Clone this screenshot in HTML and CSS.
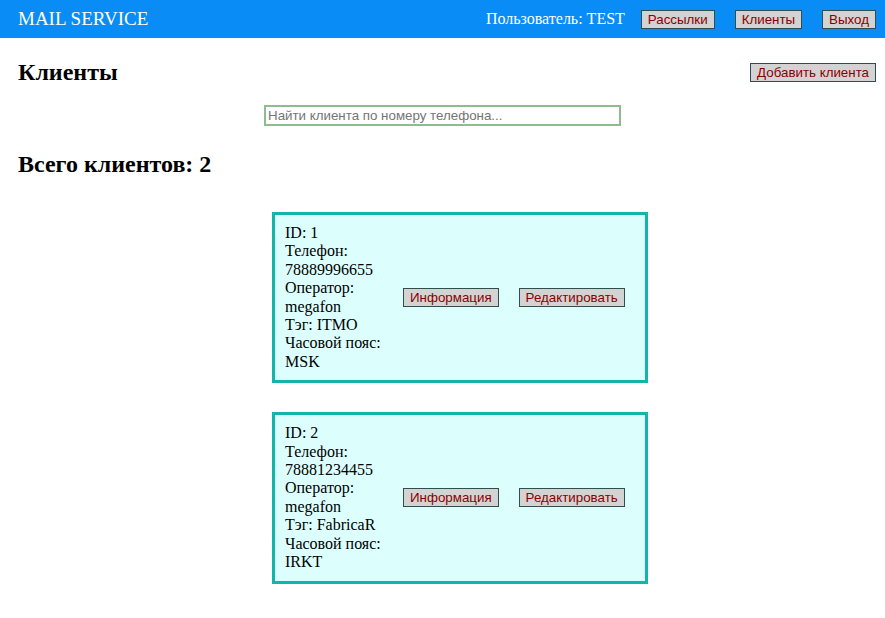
FILE: index.html
```html
<!DOCTYPE html>
<html lang="ru">
<head>
<meta charset="utf-8">
<title>Mail Service</title>
<link rel="stylesheet" href="styles.css">
</head>
<body>
<header class="topbar">
  <div class="brand">MAIL SERVICE</div>
  <nav class="nav">
    <span class="user">Пользователь: TEST</span>
    <button class="btn">Рассылки</button>
    <button class="btn">Клиенты</button>
    <button class="btn">Выход</button>
  </nav>
</header>
<main class="main">
  <div class="title-row">
    <h2 class="heading">Клиенты</h2>
    <button class="btn">Добавить клиента</button>
  </div>
  <div class="search-row">
    <input class="search" type="text" placeholder="Найти клиента по номеру телефона...">
  </div>
  <h2 class="heading total">Всего клиентов: 2</h2>
  <div class="cards">
    <div class="card">
      <div class="info">
        <div>ID: 1</div>
        <div>Телефон: 78889996655</div>
        <div>Оператор: megafon</div>
        <div>Тэг: ITMO</div>
        <div>Часовой пояс: MSK</div>
      </div>
      <div class="actions">
        <button class="btn">Информация</button>
        <button class="btn">Редактировать</button>
      </div>
    </div>
    <div class="card">
      <div class="info">
        <div>ID: 2</div>
        <div>Телефон: 78881234455</div>
        <div>Оператор: megafon</div>
        <div>Тэг: FabricaR</div>
        <div>Часовой пояс: IRKT</div>
      </div>
      <div class="actions">
        <button class="btn">Информация</button>
        <button class="btn">Редактировать</button>
      </div>
    </div>
  </div>
</main>
</body>
</html>
```
FILE: styles.css
```css
html, body {
  margin: 0;
  padding: 0;
  background: #ffffff;
  font-family: "Liberation Serif", "Times New Roman", serif;
  color: #000;
}
.topbar {
  height: 38px;
  background: #0a8cf6;
  display: flex;
  align-items: center;
  justify-content: space-between;
  padding: 0 9px 0 18px;
  color: #fff;
}
.brand {
  font-size: 19px;
}
.nav {
  display: flex;
  align-items: center;
  gap: 20px;
}
.user {
  font-size: 16px;
  margin-right: -4px;
}
.btn {
  font-family: "Liberation Sans", Arial, sans-serif;
  font-size: 13.333px;
  line-height: 15px;
  padding: 1px 6px;
  margin: 0;
  background: #d3d3d3;
  color: #8b0000;
  border: 1px solid #2f4f4f;
  border-radius: 0;
}
.main {
  padding: 0 9px 0 18px;
}
.title-row {
  display: flex;
  align-items: center;
  justify-content: space-between;
  margin-top: 20px;
}
.heading {
  font-size: 24px;
  font-weight: bold;
  margin: 0;
  line-height: 28px;
}
.search-row {
  display: flex;
  justify-content: center;
  margin: 19px 0 0 -9px;
}
.search {
  width: 357px;
  height: 21px;
  box-sizing: border-box;
  border: 2px solid #8fbc8f;
  padding: 0 2px;
  font-family: "Liberation Sans", Arial, sans-serif;
  font-size: 13.333px;
  outline: none;
}
.search::placeholder {
  color: #757575;
}
.total {
  margin-top: 24px;
}
.cards {
  display: flex;
  flex-direction: column;
  align-items: flex-start;
  gap: 29px;
  padding-left: 254px;
  margin-top: 34px;
}
.card {
  width: 376px;
  box-sizing: border-box;
  border: 3px solid #12b5a8;
  background: #dcfffe;
  display: flex;
  align-items: center;
  padding: 9px 20px 9px 10px;
  font-size: 16px;
  line-height: 18.4px;
}
.info {
  width: 100px;
}
.actions {
  display: flex;
  gap: 20px;
  margin-left: 18px;
}
```
